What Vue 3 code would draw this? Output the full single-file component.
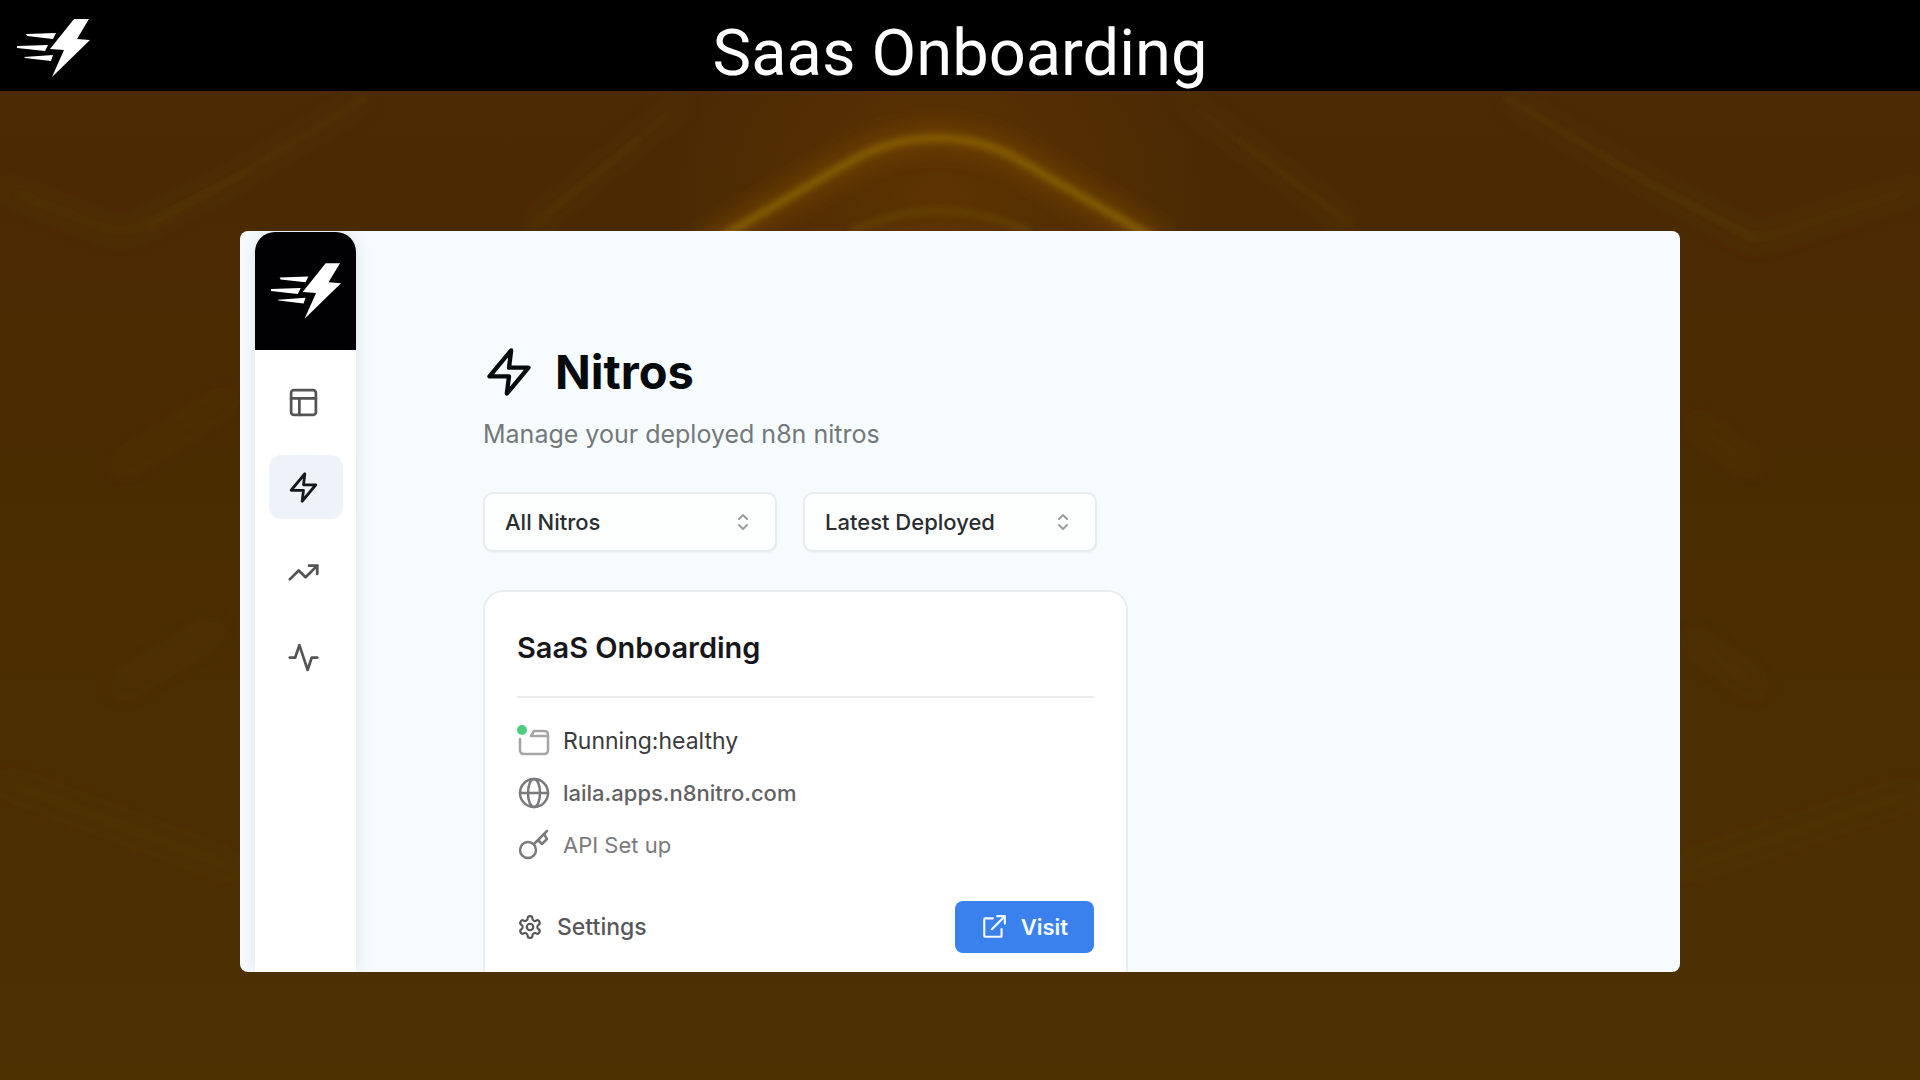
<script setup>
import { ref } from 'vue'

const filter = ref('All Nitros')
const order = ref('Latest Deployed')
const bolt = 'M13 2 3 14h9l-1 8 10-12h-9l1-8z'

const navItems = [
  { label: 'Dashboard', paths: ['M5 3h14a2 2 0 0 1 2 2v14a2 2 0 0 1-2 2H5a2 2 0 0 1-2-2V5a2 2 0 0 1 2-2z', 'M3 9h18', 'M9 21V9'] },
  { label: 'Nitros', paths: [bolt], active: true },
  { label: 'Trends', paths: ['m22 7-8.5 8.5-5-5L2 17', 'M16 7h6v6'] },
  { label: 'Activity', paths: ['M22 12h-4l-3 9L9 3l-3 9H2'] },
]
const logoShapes = [
  '73,19 88,19 76,39 89,40 51,77 63,50 49,49',
  '25,34 55,33 52,39 26,36',
  '16,46 47,45 44,51 16,48',
  '23,57 52,55 50,61 24,58',
]
</script>

<template>
  <div class="page">
    <svg class="backdrop" viewBox="0 0 1920 1080" preserveAspectRatio="none" aria-hidden="true">
      <defs>
        <linearGradient id="base" x1="0" y1="0" x2="0" y2="1">
          <stop offset="0" stop-color="#4c2904" />
          <stop offset="0.45" stop-color="#4a2c01" />
          <stop offset="1" stop-color="#4d3101" />
        </linearGradient>
        <radialGradient id="warm" gradientUnits="userSpaceOnUse" cx="940" cy="200" r="260">
          <stop offset="0" stop-color="#633600" stop-opacity="0.75" />
          <stop offset="1" stop-color="#633600" stop-opacity="0" />
        </radialGradient>
        <filter id="soft" filterUnits="userSpaceOnUse" x="0" y="0" width="1920" height="1080"><feGaussianBlur stdDeviation="3" /></filter>
        <filter id="glow" filterUnits="userSpaceOnUse" x="0" y="0" width="1920" height="1080"><feGaussianBlur stdDeviation="11" /></filter>
      </defs>
      <rect width="1920" height="1080" fill="url(#base)" />
      <rect width="1920" height="1080" fill="url(#warm)" />
      <g fill="none" stroke="#5c4300">
        <g filter="url(#glow)" stroke-width="16" stroke-opacity="0.2">
          <path d="M367 97 227 183 122 235M0 187 122 235M686 100 533 225M1180 97 1352 225" />
          <path d="M1505 97 1640 178 1756 240 1920 187M233 397 116 469M1690 420 1756 469" />
          <path d="M116 691 220 626M1688 636 1762 691M0 780 240 870M1680 870 1920 790" />
        </g>
        <g filter="url(#soft)" stroke-width="5" stroke-opacity="0.3">
          <path d="M367 97 227 183 150 226M640 140 533 225M1240 140 1352 225M1505 97 1640 178 1756 240" />
        </g>
        <path filter="url(#glow)" stroke="#7a4a00" stroke-width="22" stroke-opacity="0.7" d="M700 250 823 177 866 154Q935 122 1008 153L1055 181 1160 242" />
        <path filter="url(#soft)" stroke="#896400" stroke-width="7" stroke-opacity="0.9" d="M700 250 823 177 857 158C905 132 965 132 1012 156L1055 181 1160 242" />
        <path filter="url(#soft)" stroke="#664500" stroke-width="6" stroke-opacity="0.8" d="M850 232Q940 190 1030 232" />
      </g>
    </svg>

    <header class="topbar">
      <svg class="brand" viewBox="16 19 73 58" role="img" aria-label="n8nitro">
        <polygon v-for="s in logoShapes" :key="s" :points="s" fill="#fff" />
      </svg>
      <h1 class="title">Saas Onboarding</h1>
    </header>

    <main class="panel">
      <nav class="sidebar" aria-label="Main">
        <a href="#" class="side-logo" aria-label="n8nitro home">
          <svg viewBox="16 19 73 58">
            <polygon v-for="s in logoShapes" :key="s" :points="s" fill="#fff" />
          </svg>
        </a>
        <a v-for="item in navItems" :key="item.label" href="#" class="nav-link" :class="{ active: item.active }" :aria-label="item.label">
          <svg class="icon nav-icon" viewBox="0 0 24 24"><path v-for="p in item.paths" :key="p" :d="p" /></svg>
        </a>
      </nav>

      <section class="content">
        <div class="heading">
          <svg class="icon heading-icon" viewBox="0 0 24 24"><path :d="bolt" /></svg>
          <h2>Nitros</h2>
        </div>
        <p class="subtitle">Manage your deployed n8n nitros</p>

        <div class="filters">
          <div class="picker">
            <select v-model="filter" aria-label="Filter nitros"><option>All Nitros</option></select>
            <svg class="icon updown" viewBox="0 0 12 18"><path d="m2 6 4-4 4 4M2 12l4 4 4-4" /></svg>
          </div>
          <div class="picker">
            <select v-model="order" aria-label="Sort nitros"><option>Latest Deployed</option></select>
            <svg class="icon updown" viewBox="0 0 12 18"><path d="m2 6 4-4 4 4M2 12l4 4 4-4" /></svg>
          </div>
        </div>

        <article class="card">
          <h3>SaaS Onboarding</h3>
          <ul class="facts">
            <li class="status">
              <svg class="icon" viewBox="0 0 34 34">
                <g stroke="#a3a6a5"><path d="M3 15v11q0 4 4 4h20q4 0 4-4V11q0-4-4-4H17l-3 5h17" /></g>
                <circle cx="5" cy="6" r="5" fill="#4fce80" stroke="none" />
              </svg>
              <span>Running:healthy</span>
            </li>
            <li class="host">
              <svg class="icon" viewBox="0 0 34 34"><circle cx="17" cy="17" r="14" /><ellipse cx="17" cy="17" rx="6" ry="14" /><path d="M3 17h28" /></svg>
              <a href="#">laila.apps.n8nitro.com</a>
            </li>
            <li class="api">
              <svg class="icon" viewBox="0 0 34 34"><circle cx="11" cy="22" r="8" /><path d="M17 16 30 3M21 12l4 4 5-5-3-5" /></svg>
              <span>API Set up</span>
            </li>
          </ul>
          <div class="actions">
            <button type="button" class="settings">
              <svg class="icon" viewBox="0 0 24 24">
                <path d="M12.2 2h-.4a2 2 0 0 0-2 2v.2a2 2 0 0 1-1 1.7l-.4.3a2 2 0 0 1-2 0l-.2-.1a2 2 0 0 0-2.7.7l-.2.4a2 2 0 0 0 .7 2.7l.2.1a2 2 0 0 1 1 1.7v.6a2 2 0 0 1-1 1.7l-.2.1a2 2 0 0 0-.7 2.7l.2.4a2 2 0 0 0 2.7.7l.2-.1a2 2 0 0 1 2 0l.4.3a2 2 0 0 1 1 1.7v.2a2 2 0 0 0 2 2h.4a2 2 0 0 0 2-2v-.2a2 2 0 0 1 1-1.7l.4-.3a2 2 0 0 1 2 0l.2.1a2 2 0 0 0 2.7-.7l.2-.4a2 2 0 0 0-.7-2.7l-.2-.1a2 2 0 0 1-1-1.7v-.6a2 2 0 0 1 1-1.7l.2-.1a2 2 0 0 0 .7-2.7l-.2-.4a2 2 0 0 0-2.7-.7l-.2.1a2 2 0 0 1-2 0l-.4-.3a2 2 0 0 1-1-1.7V4a2 2 0 0 0-2-2z" />
                <circle cx="12" cy="12" r="3" />
              </svg>
              Settings
            </button>
            <button type="button" class="visit">
              <svg class="icon" viewBox="0 0 24 24"><path d="M11 4H4a1 1 0 0 0-1 1v15a1 1 0 0 0 1 1h14a1 1 0 0 0 1-1v-6M15 2h7v7M10 14 22 2" /></svg>
              Visit
            </button>
          </div>
        </article>
      </section>
    </main>
  </div>
</template>

<style>
body {
  margin: 0;
  background: #4c2e01;
}
</style>

<style scoped>
.page {
  position: relative;
  min-height: 100vh;
  box-sizing: border-box;
  padding-bottom: 108px;
  font-family: Inter, "Liberation Sans", sans-serif;
}
.backdrop {
  position: absolute;
  inset: 0;
  width: 100%;
  height: 100%;
}
.topbar {
  position: relative;
  display: grid;
  grid-template-columns: 1fr auto 1fr;
  align-items: center;
  height: 91px;
  background: #000;
}
.brand {
  width: 73px;
  height: 58px;
  margin: 4px 0 0 17px;
}
.title {
  margin: 14px 0 0;
  color: #fff;
  font: 400 65px/72px Roboto, sans-serif;
}
.panel {
  position: relative;
  display: flex;
  width: 75%;
  margin: 140px auto 0;
  overflow: hidden;
  border-radius: 8px;
  background: #f6fbfe;
}
.sidebar {
  display: flex;
  flex: none;
  flex-direction: column;
  align-items: center;
  width: 101px;
  margin: 1px 0 0 15px;
  border-radius: 20px 20px 0 0;
  background: #fff;
  box-shadow: 0 0 16px rgba(20, 40, 40, 0.12);
}
.side-logo {
  display: flex;
  align-items: center;
  justify-content: center;
  width: 100%;
  height: 118px;
  margin-bottom: 20px;
  border-radius: 20px 20px 0 0;
  background: #010103;
}
.side-logo svg {
  width: 70px;
  height: 56px;
}
.nav-link {
  display: flex;
  align-items: center;
  justify-content: center;
  width: 74px;
  height: 64px;
  margin-bottom: 21px;
  border-radius: 12px;
  color: #565456;
}
.nav-link.active {
  background: #eef3fa;
  color: #15181f;
}
.icon {
  flex: none;
  fill: none;
  stroke: currentColor;
  stroke-width: 2;
  stroke-linecap: round;
  stroke-linejoin: round;
}
.nav-icon {
  width: 33px;
  height: 33px;
  margin-right: 4px;
}
.content {
  flex: 1;
  padding: 111px 24px 0 127px;
}
.heading {
  display: flex;
  align-items: center;
  gap: 20px;
  color: #050a0d;
}
.heading-icon {
  width: 52px;
  height: 52px;
}
h2 {
  margin: 0;
  font-size: 47px;
  font-weight: 700;
  line-height: 60px;
}
.subtitle {
  margin: 14px 0 0;
  color: #73787b;
  font-size: 25px;
  line-height: 36px;
}
.filters {
  display: flex;
  gap: 26px;
  margin-top: 40px;
}
.picker {
  position: relative;
  width: 294px;
}
select {
  box-sizing: border-box;
  width: 100%;
  height: 60px;
  padding: 0 48px 0 20px;
  appearance: none;
  border: 2px solid #e7ecee;
  border-radius: 10px;
  background: #fdfefe;
  box-shadow: 0 1px 2px rgba(0, 0, 0, 0.05);
  color: #2a2e31;
  font: 500 22px/30px Inter, sans-serif;
}
.updown {
  position: absolute;
  top: 21px;
  right: 28px;
  width: 12px;
  height: 18px;
  color: #9a9d9e;
  pointer-events: none;
}
.card {
  box-sizing: border-box;
  max-width: 645px;
  margin-top: 38px;
  padding: 36px 32px 19px;
  border: 2px solid #e8edef;
  border-bottom: 0;
  border-radius: 20px 20px 0 0;
  background: #fff;
}
h3 {
  margin: 0;
  padding-bottom: 28px;
  border-bottom: 2px solid #ececee;
  color: #17171b;
  font-size: 29px;
  font-weight: 600;
  line-height: 40px;
}
.facts {
  margin: 17px 0 0;
  padding: 0;
  list-style: none;
}
.facts li {
  display: flex;
  align-items: center;
  gap: 12px;
  height: 52px;
  color: #7a7a7c;
  font-size: 22px;
}
.facts .icon {
  width: 34px;
  height: 34px;
  stroke-width: 2.5;
}
.facts .status {
  color: #3a3a3d;
  font-size: 23px;
}
.host a {
  color: #626265;
  font-weight: 500;
  text-decoration: none;
}
.actions {
  display: flex;
  align-items: center;
  justify-content: space-between;
  margin-top: 30px;
}
button {
  display: flex;
  align-items: center;
  gap: 14px;
  height: 52px;
  padding: 0;
  border: 0;
  background: none;
  font: 500 23px/30px Inter, sans-serif;
}
button .icon {
  width: 26px;
  height: 26px;
}
.settings {
  color: #57575a;
}
.visit {
  padding: 0 26px;
  border-radius: 8px;
  background: #3a81ee;
  color: #f3f9ff;
  font-size: 22px;
  font-weight: 600;
}
</style>
